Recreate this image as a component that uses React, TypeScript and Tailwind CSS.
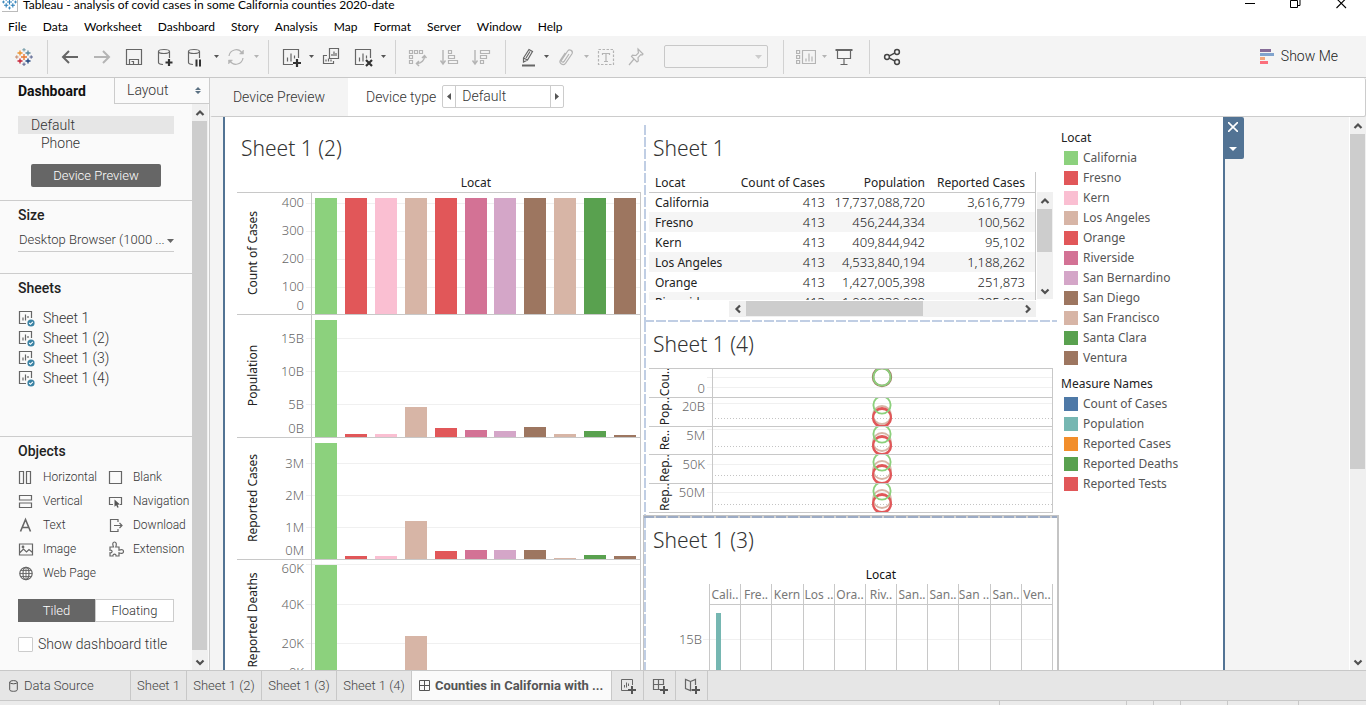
import React from "react";

const uiFont = "font-[Roboto,'Liberation_Sans',sans-serif] font-light";
const winFont = "font-[Lato,'Liberation_Sans',sans-serif]";
const vizFont = "font-['Noto_Sans','Open_Sans',sans-serif]";

const GREEN = "#8cd17d";
const RED = "#e15759";
const PINK = "#fabfd2";
const TAN = "#d7b5a6";
const ROSE = "#d37295";
const LILAC = "#d4a6c8";
const BROWN = "#9d7660";
const DARK_GREEN = "#59a14f";

const counties = [
  { name: "California", color: GREEN, short: "Cali.." },
  { name: "Fresno", color: RED, short: "Fre.." },
  { name: "Kern", color: PINK, short: "Kern" },
  { name: "Los Angeles", color: TAN, short: "Los .." },
  { name: "Orange", color: RED, short: "Ora.." },
  { name: "Riverside", color: ROSE, short: "Riv.." },
  { name: "San Bernardino", color: LILAC, short: "San.." },
  { name: "San Diego", color: BROWN, short: "San.." },
  { name: "San Francisco", color: TAN, short: "San .." },
  { name: "Santa Clara", color: DARK_GREEN, short: "San.." },
  { name: "Ventura", color: BROWN, short: "Ven.." },
];

const measures = [
  { name: "Count of Cases", color: "#4e79a7" },
  { name: "Population", color: "#76b7b2" },
  { name: "Reported Cases", color: "#f28e2b" },
  { name: "Reported Deaths", color: "#59a14f" },
  { name: "Reported Tests", color: "#e15759" },
];

/* ---------- toolbar ---------- */

function Caret({ faint = false, label }: { faint?: boolean; label: string }) {
  return (
    <button aria-label={label} className="flex h-8 w-2 items-center justify-center">
      <svg width="5" height="3" viewBox="0 0 5 3" fill={faint ? "#b4b4b4" : "#555"}>
        <path d="M0 0h5L2.500 3z" />
      </svg>
    </button>
  );
}

function Tool({
  label,
  narrow = false,
  faint = false,
  size = 20,
  children,
}: {
  label: string;
  narrow?: boolean;
  faint?: boolean;
  size?: number;
  children: React.ReactNode;
}) {
  return (
    <button
      aria-label={label}
      className={`flex h-8 items-center justify-center ${narrow ? "w-7" : "w-8"} ${faint ? "text-[#b4b4b4]" : "text-[#666]"}`}
    >
      <svg width={size} height="20" viewBox={`0 0 ${size} 20`} fill="none" stroke="currentColor" strokeWidth="1.2">
        {children}
      </svg>
    </button>
  );
}

function TableauMark({ mono = false }: { mono?: boolean }) {
  const c = (v: string) => (mono ? "#2d7fb8" : v);
  return (
    <svg width="18" height="18" viewBox="0 0 18 18" fill="none" strokeWidth="1.3">
      <path d="M9 6v6M6 9h6" stroke={c("#e8762c")} />
      <path d="M5 2.500v5M2.500 5h5" stroke={c("#eb912c")} />
      <path d="M13 2.500v5M10.500 5h5" stroke={c("#59879b")} />
      <path d="M5 10.500v5M2.500 13h5" stroke={c("#c72035")} />
      <path d="M13 10.500v5M10.500 13h5" stroke={c("#1f447e")} />
      <path d="M9 0v3.500M7.300 1.800h3.400" stroke={c("#7199a6")} strokeWidth="1" />
      <path d="M9 14.500v3.500M7.300 16.200h3.400" stroke={c("#5b6591")} strokeWidth="1" />
      <path d="M1.800 7.300v3.400M0 9h3.500" stroke={c("#c98a6a")} strokeWidth="1" />
      <path d="M16.200 7.300v3.400M14.500 9H18" stroke={c("#5b6591")} strokeWidth="1" />
    </svg>
  );
}

const group = "flex h-[34px] items-center border-r border-[#d2d2d2]";

function Toolbar() {
  return (
    <div className="flex h-[42px] shrink-0 items-center border-b border-[#c8c8c8] bg-[#f4f4f4]">
      <div className={`${group} w-12 justify-center`}>
        <button aria-label="Start page">
          <TableauMark />
        </button>
      </div>
      <div className={`${group} pr-2 pl-[6px]`}>
        <Tool label="Undo">
          <path d="M18 10H3M9 4l-6 6 6 6" strokeWidth="2" />
        </Tool>
        <Tool label="Redo" faint>
          <path d="M2 10h15M11 4l6 6-6 6" strokeWidth="2" />
        </Tool>
        <Tool label="Save">
          <path d="M2.500 2.500h15v15h-15zM5.500 17.500v-5h9v5M7.500 14.500h2v3" />
        </Tool>
        <Tool label="New data source">
          <ellipse cx="8" cy="4.500" rx="5.500" ry="2" />
          <path d="M2.500 4.500v11c0 .9 2 1.800 4.500 2M13.500 4.500V11" />
          <path d="M13 12v7M9.500 15.500h7" stroke="#333" strokeWidth="2.200" />
        </Tool>
        <Tool label="Pause auto updates" narrow>
          <ellipse cx="8" cy="4.500" rx="5.500" ry="2" />
          <path d="M2.500 4.500v11c0 .9 2 1.800 4.500 2M13.500 4.500V11" />
          <path d="M10.500 12.500v7M14 12.500v7" stroke="#333" strokeWidth="2" />
        </Tool>
        <span className="w-[2px]" />
        <Caret label="Update options" />
        <Tool label="Run update" faint>
          <path d="M3 9a7.200 7.200 0 0 1 13-3.200M17 11a7.200 7.200 0 0 1-13 3.200" />
          <path d="M17.500 3v4h-4zM2.500 17v-4h4z" fill="currentColor" strokeWidth=".5" />
        </Tool>
        <Caret label="Run options" faint />
      </div>
      <div className={`${group} pr-2 pl-[6px]`}>
        <Tool label="New worksheet">
          <path d="M12 17.500H2.500v-15h15V11M6.500 14.500v-4M10 14.500v-8M13.500 11.500v-3" />
          <path d="M16 12v8M12 16h8" stroke="#333" strokeWidth="2.200" />
        </Tool>
        <Caret label="New worksheet options" />
        <Tool label="Duplicate">
          <path d="M8.500 1.500h9v10h-9zM11 9V7M13 9V4.500M15 9V6M6 8.500H2.500v8h10V14M5 14.500v-2M7.500 14.500v-3M10 14.500v-2" />
        </Tool>
        <Tool label="Clear sheet">
          <path d="M11 17.500H2.500v-15h15V11M6.500 14.500v-4M10 14.500v-8M13.500 11.500v-3" />
          <path d="M13 13l6 6M19 13l-6 6" stroke="#333" strokeWidth="2.200" />
        </Tool>
        <Caret label="Clear options" />
      </div>
      <div className={`${group} pr-2 pl-[5px]`}>
        <Tool label="Swap rows and columns" faint>
          <path d="M2.500 3.500h3v3h-3zM7.500 3.500h3v3h-3zM12.500 3.500h3v3h-3zM2.500 8.500h3v3h-3zM2.500 13.500h3v3h-3z" />
          <path d="M17.500 9c0 4-3 7.500-7.500 7.500M15 11l2.500-2.500L19.500 11M12 14l-2.500 2.500L12 19" strokeWidth="1.500" />
        </Tool>
        <Tool label="Sort ascending" faint>
          <path d="M4 3v13M1.500 13.500L4 17l2.500-3.500" strokeWidth="1.400" />
          <path d="M9.500 3.500h3v3h-3zM9.500 8.500h6v3h-6zM9.500 13.500h9v3h-9z" />
        </Tool>
        <Tool label="Sort descending" faint>
          <path d="M4 3v13M1.500 13.500L4 17l2.500-3.500" strokeWidth="1.400" />
          <path d="M9.500 3.500h9v3h-9zM9.500 8.500h6v3h-6zM9.500 13.500h3v3h-3z" />
        </Tool>
      </div>
      <div className={`${group} pr-[15px] pl-2`}>
        <Tool label="Highlight" narrow>
          <path d="M5.500 11l5.500-8.500 3.500 2L9.500 13l-4 2zM5.500 11l4 2M12 4.500l-4 6.500" />
          <path d="M4 18.500h13" strokeWidth="2" />
        </Tool>
        <Caret label="Highlight options" />
        <Tool label="Group members" faint>
          <path d="M13 7l-5 7.500c-1.500 1.500-3.300 0-2.300-1.700l6-8.800c1.800-2.400 5.800-.2 4.300 2.800l-6.500 9.500c-2.500 3-6.700 0-5.200-3l5-7.500" />
        </Tool>
        <Caret label="Group options" faint />
        <Tool label="Show mark labels" faint>
          <path d="M2.500 2.500h15v15h-15z" strokeDasharray="2.500 1.500" />
          <path d="M6.500 8V6.500h7V8M10 6.500v8M8 14.500h4" />
        </Tool>
        <Tool label="Fix axes" narrow faint>
          <path d="M12 2l5 5-1 1-1.200-.3-2.800 3 .3 3.300-1.300 1L5.500 9.500l1-1.300 3.500.3 2.500-2.700L12 3.500zM8 12l-5 6" />
        </Tool>
        <select
          aria-label="Fit"
          disabled
          className="ml-[14px] h-[23px] w-[104px] appearance-none rounded-[2px] border border-[#c8c8c8] bg-[#f4f4f4]"
        >
          <option></option>
        </select>
        <svg className="-ml-[13px] mr-[6px]" width="7" height="4" viewBox="0 0 7 4" fill="#ccc">
          <path d="M0 0h7L3.500 4z" />
        </svg>
      </div>
      <div className={`${group} pr-[9px] pl-2`}>
        <Tool label="Show or hide cards" narrow faint>
          <path d="M.6 3.500h3v3h-3zM.6 8.500h3v3h-3zM.6 13.500h3v3h-3zM6.500 3.500h13v13h-13zM10 14.500v-3M13 14.500v-8M16 14.500v-5" />
        </Tool>
        <Caret label="Card options" faint />
        <Tool label="Presentation mode">
          <path d="M3.500 3.500h13v8h-13zM10 11.500v6M6.500 17.500h7" />
          <path d="M1.500 3h17" strokeWidth="2" />
        </Tool>
      </div>
      <div className="flex flex-1 items-center pl-[6px]">
        <Tool label="Share">
          <g stroke="#444" strokeWidth="1.500">
            <circle cx="5" cy="10" r="2.400" />
            <circle cx="15" cy="5" r="2.400" />
            <circle cx="15" cy="15" r="2.400" />
            <path d="M7.400 8.900l5.200-2.700M7.400 11.100l5.200 2.700" />
          </g>
        </Tool>
      </div>
      <button className={`${uiFont} mr-7 flex items-center gap-[6px] text-[14px] text-[#222]`}>
        <svg width="15" height="16" viewBox="0 0 15 16">
          <path fill="#866c98" d="M0 0h11v3H0z" />
          <path fill="#80a3cd" d="M0 4h14v3H0z" />
          <path fill="#f2a57c" d="M0 8h5v3H0z" />
          <path fill="#fb6e7b" d="M0 12h8v3H0z" />
        </svg>
        Show Me
      </button>
    </div>
  );
}

/* ---------- scroll bars ---------- */

function Chevron({ dir }: { dir: "up" | "down" | "left" | "right" }) {
  const d = {
    up: "M1.500 7L5 3.500 8.500 7",
    down: "M1.500 3.500L5 7l3.500-3.500",
    left: "M7 1.500L3.500 5 7 8.500",
    right: "M3 1.500L6.500 5 3 8.500",
  }[dir];
  return (
    <svg width="10" height="10" viewBox="0 0 10 10" fill="none" stroke="#505050" strokeWidth="2.200">
      <path d={d} />
    </svg>
  );
}

function VScroll({ thumb }: { thumb: string }) {
  return (
    <div className="flex h-full flex-col items-center bg-[#f0f0f0]">
      <span className="flex h-[17px] items-center"><Chevron dir="up" /></span>
      <div className="min-h-0 w-full flex-1">
        <div className={`w-[15px] bg-[#cdcdcd] ${thumb}`} />
      </div>
      <span className="flex h-[17px] items-center"><Chevron dir="down" /></span>
    </div>
  );
}

/* ---------- left panel ---------- */

function SheetIcon() {
  return (
    <svg width="18" height="18" viewBox="0 0 18 18" fill="none" stroke="#666" strokeWidth="1.200">
      <path d="M8 14.500H1.500v-12h12V9M5 11.500v-3M7.500 11.500v-6M10 9V7" />
      <circle cx="13" cy="14" r="3.600" fill="#3a82a3" stroke="none" />
      <path d="M11.200 14l1.300 1.300 2.300-2.500" stroke="#fff" strokeWidth="1.100" />
    </svg>
  );
}

const objectIcons: Record<string, React.ReactNode> = {
  Horizontal: <path d="M1.500 2.500h4v12h-4zM8.500 2.500h4v12h-4z" />,
  Blank: <path d="M1.500 2.500h12v12h-12z" />,
  Vertical: <path d="M1.500 2.500h12v4.500h-12zM1.500 10h12v4.500h-12z" />,
  Navigation: (
    <>
      <path d="M5 11.500H1.500v-7h12v7H12" />
      <path d="M6.500 6.500l5.500 5-2.500.2 1.200 2.500-1.300.6-1.200-2.600-1.700 1.500z" fill="#555" stroke="none" />
    </>
  ),
  Text: <path d="M2.500 14.500L7.500 2.500l5 12M4.200 10.500h6.600" strokeWidth="1.600" />,
  Download: <path d="M10 5V2.500H2.500v12H10V12M6 8.500h8M11.500 6l2.500 2.500-2.500 2.500" />,
  Image: (
    <>
      <path d="M1.500 3h13v11h-13zM1.500 12l4-4 3 3 2.500-2.500 3.500 3" />
      <circle cx="5" cy="6" r=".8" />
    </>
  ),
  Extension: (
    <path d="M2 6h3.500C4 2.500 5 1 6.500 1S9 2.500 7.800 6H11v3.200c3-1.200 4.500-.4 4.500 1.300s-1.500 2.500-4.500 1.300V15H8c.5-2.500-3.500-2.500-3 0H2v-3.200c2.800.6 2.800-3.200 0-2.600z" />
  ),
  "Web Page": (
    <>
      <circle cx="8" cy="8.500" r="6.200" />
      <ellipse cx="8" cy="8.500" rx="3" ry="6.200" />
      <path d="M1.800 8.500h12.400M2.600 5.500h10.800M2.600 11.500h10.800M8 2.300v12.400" strokeWidth=".9" />
    </>
  ),
};

const objects = ["Horizontal", "Blank", "Vertical", "Navigation", "Text", "Download", "Image", "Extension", "Web Page"];
const heading = "text-[14px] font-medium leading-[18px] text-[#222]";

function SidePanel() {
  return (
    <aside className={`${uiFont} flex w-[210px] shrink-0 flex-col border-r border-[#ccc] bg-[#fafafa] text-[#333]`}>
      <div className="flex h-[26px] shrink-0">
        <button className="w-[114px] pl-[18px] text-left text-[14px] font-bold text-[#111]">Dashboard</button>
        <button className="flex flex-1 items-center justify-between border-b border-l border-[#ccc] pr-2 pl-3 text-[14px]">
          Layout
          <svg width="6" height="7" viewBox="0 0 6 7" fill="#5b7183">
            <path d="M0 3h6L3 0zM0 4h6L3 7z" />
          </svg>
        </button>
      </div>
      <div className="flex min-h-0 flex-1">
        <div className="flex min-w-0 flex-1 flex-col">
          <section className="h-[97px] shrink-0 border-b border-[#ccc] px-[18px] pt-3">
            <button className="block h-[18px] w-full bg-[#e6e6e6] pl-[13px] text-left text-[14px] leading-[18px]">Default</button>
            <button className="block h-[18px] pl-[23px] text-[14px] leading-[18px]">Phone</button>
            <button className="mt-3 ml-[13px] block h-[23px] w-[130px] rounded-[2px] bg-[#666] text-[13px] text-white">
              Device Preview
            </button>
          </section>
          <section className="h-[73px] shrink-0 border-b border-[#ccc] px-[18px] pt-[5px]">
            <h2 className={heading}>Size</h2>
            <div className="mt-[6px] flex h-[22px] items-center border-b border-[#ccc]">
              <select aria-label="Size" className="min-w-0 flex-1 appearance-none bg-transparent pb-px pl-px text-[13px]">
                <option>Desktop Browser (1000 ...</option>
              </select>
              <svg width="7" height="4" viewBox="0 0 7 4" fill="#666">
                <path d="M0 0h7L3.500 4z" />
              </svg>
            </div>
          </section>
          <section className="h-[163px] shrink-0 border-b border-[#ccc] px-[18px] pt-[5px]">
            <h2 className={heading}>Sheets</h2>
            <ul className="mt-[11px]">
              {["Sheet 1", "Sheet 1 (2)", "Sheet 1 (3)", "Sheet 1 (4)"].map((s) => (
                <li key={s} className="flex h-5 items-center gap-[7px] text-[14px]">
                  <SheetIcon />
                  {s}
                </li>
              ))}
            </ul>
          </section>
          <section className="pt-[5px] pl-[18px]">
            <h2 className={heading}>Objects</h2>
            <ul className="mt-[5px] grid grid-cols-[90px_84px] text-[12px]">
              {objects.map((o) => (
                <li key={o} className="flex h-6 items-center gap-2 whitespace-nowrap">
                  <svg className="shrink-0" width="17" height="17" viewBox="0 0 17 17" fill="none" stroke="#666" strokeWidth="1.200">
                    {objectIcons[o]}
                  </svg>
                  {o}
                </li>
              ))}
            </ul>
            <div className="mt-[14px] flex h-[23px] w-[156px] text-[13px]">
              <button className="flex-1 bg-[#666] text-white">Tiled</button>
              <button className="flex-1 border border-[#ccc] bg-white">Floating</button>
            </div>
            <label className="mt-[14px] flex h-4 items-center gap-[5px] text-[14px] leading-4 whitespace-nowrap">
              <input type="checkbox" className="size-[15px] appearance-none rounded-[1px] border border-[#ccc] bg-white" />
              Show dashboard title
            </label>
          </section>
        </div>
        <div className="mr-px w-4 shrink-0">
          <VScroll thumb="h-[calc(100%-3px)]" />
        </div>
      </div>
    </aside>
  );
}

/* ---------- views ---------- */

function ViewTitle({ children }: { children: React.ReactNode }) {
  return <h2 className="h-[30px] text-[21px] leading-[30px] font-light text-[#333]">{children}</h2>;
}

const barX = [78, 108, 138, 168, 198, 228, 257, 287, 317, 347, 377];

const barRows = [
  {
    label: "Count of Cases", top: 29, base: 151,
    ticks: [["400", 10, 11], ["300", 38, 39], ["200", 66, 67], ["100", 94, 95], ["0", 113, 0]] as [string, number, number][],
    bars: [116, 116, 116, 116, 116, 116, 116, 116, 116, 116, 116],
  },
  {
    label: "Population", top: 151, base: 274,
    ticks: [["15B", 24, 24], ["10B", 57, 57], ["5B", 90, 90], ["0B", 114, 0]] as [string, number, number][],
    bars: [117, 3, 3, 30, 9, 7, 6, 10, 3, 6, 2],
  },
  {
    label: "Reported Cases", top: 274, base: 396,
    ticks: [["3M", 26, 26], ["2M", 58, 58], ["1M", 90, 90], ["0M", 113, 0]] as [string, number, number][],
    bars: [116, 3, 3, 38, 8, 9, 9, 9, 1, 4, 3],
  },
  {
    label: "Reported Deaths", top: 396, base: 518,
    ticks: [["60K", 9, 5], ["40K", 45, 45], ["20K", 84, 84], ["0K", 113, 0]] as [string, number, number][],
    bars: [116, 3, 3, 45, 9, 9, 9, 9, 1, 4, 3],
  },
];

function BarView() {
  return (
    <svg width="404" height="520" viewBox="0 0 404 520" fontSize="12">
      <text x="239" y="24" textAnchor="middle" fill="#222">Locat</text>
      {barRows.map((r) => (
        <g key={r.label}>
          {r.ticks.map(([t, ty, gy]) => (
            <g key={t}>
              {gy > 0 && <rect x="69" y={r.top + gy} width="334" height="1" fill="#f0f0f0" />}
              <text x="67" y={r.top + ty + 5} textAnchor="end" fill="#666" className="font-light" fontSize="13">{t}</text>
            </g>
          ))}
          {r.bars.map((h, i) => (
            <rect key={i} x={barX[i]} y={r.base - h} width="22" height={h} fill={counties[i].color} />
          ))}
          <text transform={`translate(20 ${(r.top + r.base) / 2}) rotate(-90)`} textAnchor="middle" fill="#222">{r.label}</text>
          <rect x="0" y={r.top} width="404" height="1" fill="#c8c8c8" />
        </g>
      ))}
      <rect x="74" y="29" width="1" height="491" fill="#c8c8c8" />
      <rect x="403" y="29" width="1" height="491" fill="#c8c8c8" />
    </svg>
  );
}

const crosstab = [
  ["California", "413", "17,737,088,720", "3,616,779"],
  ["Fresno", "413", "456,244,334", "100,562"],
  ["Kern", "413", "409,844,942", "95,102"],
  ["Los Angeles", "413", "4,533,840,194", "1,188,262"],
  ["Orange", "413", "1,427,005,398", "251,873"],
  ["Riverside", "413", "1,090,930,090", "295,963"],
];

function Crosstab() {
  return (
    <div className="flex h-32 pl-[3px]">
      <div className="w-[387px] shrink-0 overflow-hidden border-r border-[#c8c8c8]">
        <table className="w-full table-fixed border-separate border-spacing-0 text-[12px] text-[#222]">
          <colgroup>
            <col className="w-[82px]" />
            <col className="w-[100px]" />
            <col className="w-[100px]" />
            <col className="w-[104px]" />
          </colgroup>
          <thead>
            <tr className="h-[21px]">
              {["Locat", "Count of Cases", "Population", "Reported Cases"].map((h, i) => (
                <th
                  key={h}
                  className={`border-b border-[#c8c8c8] p-0 pt-[2px] font-normal whitespace-nowrap leading-[18px] ${i === 0 ? "pl-[6px] text-left" : i === 3 ? "pr-[10px] text-right" : "pr-[6px] text-right"}`}
                >
                  {h}
                </th>
              ))}
            </tr>
          </thead>
          <tbody>
            {crosstab.map((row) => (
              <tr key={row[0]} className="h-5 first:h-[19px] even:bg-[#f5f5f5]">
                {row.map((v, i) => (
                  <td
                    key={i}
                    className={`p-0 leading-[19px] whitespace-nowrap ${i === 0 ? "pl-[6px]" : i === 3 ? "pr-[10px] text-right text-[13px] font-light" : "pr-[6px] text-right text-[13px] font-light"}`}
                  >
                    {v}
                  </td>
                ))}
              </tr>
            ))}
          </tbody>
        </table>
      </div>
      <div className="mt-5 ml-px h-[107px] w-4">
        <VScroll thumb="h-[43px]" />
      </div>
    </div>
  );
}

const dotRows = [
  { label: "Cou..", top: 0, tick: "0", ty: 20, grid: [9, 19], dots: [[9, BROWN], [9, GREEN]] },
  { label: "Pop..", top: 29, tick: "20B", ty: 38, grid: [35], dotted: 50, dots: [[47, TAN], [50, RED], [49, RED], [37, GREEN]] },
  { label: "Re..", top: 58, tick: "5M", ty: 67, grid: [61], dotted: 78, dots: [[74, TAN], [78, RED], [77, RED], [66, GREEN]] },
  { label: "Rep..", top: 86, tick: "50K", ty: 96, grid: [96], dotted: 107, dots: [[102, TAN], [107, RED], [106, RED], [94, GREEN]] },
  { label: "Rep..", top: 115, tick: "50M", ty: 124, grid: [124], dotted: 136, dots: [[131, TAN], [136, RED], [135, RED], [123, GREEN]] },
] as { label: string; top: number; tick: string; ty: number; grid: number[]; dotted?: number; dots: [number, string][] }[];

function DotView() {
  return (
    <svg width="404" height="145" viewBox="0 0 404 145" fontSize="12">
      {dotRows.map((r, i) => (
        <g key={i}>
          <clipPath id={`pane-${i}`}>
            <rect x="64" y={r.top + 1} width="339" height="28" />
          </clipPath>
          {r.grid.map((g) => (
            <rect key={g} x="58" y={g} width="345" height="1" fill="#f0f0f0" />
          ))}
          {r.dotted && <path d={`M66 ${r.dotted}.5h337`} stroke="#c4c4c4" strokeDasharray="1 2" />}
          <g clipPath={`url(#pane-${i})`} fill="none">
            {r.dots.map(([y, c], k) => (
              <circle key={k} cx="233" cy={y} r={c === GREEN ? 8.600 : 9} stroke={c} strokeWidth={c === BROWN ? 2.400 : 1.900} />
            ))}
          </g>
          <text x="56" y={r.ty + 5} textAnchor="end" fill="#666" className="font-light" fontSize="13">{r.tick}</text>
          <text transform={`translate(20 ${r.top + 14}) rotate(-90)`} textAnchor="middle" fill="#222">{r.label}</text>
          <rect x="0" y={r.top} width="404" height="1" fill="#c8c8c8" />
        </g>
      ))}
      <rect x="0" y="144" width="404" height="1" fill="#c8c8c8" />
      <rect x="63" y="0" width="1" height="145" fill="#c8c8c8" />
      <rect x="403" y="0" width="1" height="145" fill="#c8c8c8" />
    </svg>
  );
}

const colX = [60, 91, 122, 154, 185, 216, 247, 278, 309, 341, 372, 403];

function ColumnView() {
  return (
    <svg width="404" height="130" viewBox="0 0 404 130" fontSize="12">
      <text x="232" y="16" textAnchor="middle" fill="#111">Locat</text>
      <rect x="54" y="76" width="350" height="1" fill="#f0f0f0" />
      <text x="53" y="81" textAnchor="end" fill="#666" className="font-light" fontSize="13">15B</text>
      {colX.map((x) => (
        <rect key={x} x={x} y="21" width="1" height="109" fill="#c8c8c8" />
      ))}
      <rect x="60" y="41" width="344" height="1" fill="#c8c8c8" />
      {counties.map((c, i) => (
        <text key={c.name} x={colX[i] + 16} y="36" textAnchor="middle" fill="#787878">{c.short}</text>
      ))}
      <rect x="67" y="50" width="5" height="80" fill="#76b7b2" />
    </svg>
  );
}

const vDash = "w-[2px] shrink-0 bg-[repeating-linear-gradient(180deg,#c0cee4_0px,#c0cee4_10px,transparent_10px,transparent_12px)]";
const hDash = "h-[2px] shrink-0 bg-[repeating-linear-gradient(90deg,#c0cee4_0px,#c0cee4_10px,transparent_10px,transparent_12px)]";

function Legend({ title, items }: { title: string; items: { name: string; color: string }[] }) {
  return (
    <div>
      <h3 className="mb-[1px] h-[18px] text-[12px] leading-[18px] text-[#222]">{title}</h3>
      <ul>
        {items.map((it) => (
          <li key={it.name} className="flex h-5 items-center gap-[5px] pl-[3px] text-[12px] text-[#555]">
            <span className="size-[14px]" style={{ backgroundColor: it.color }} />
            {it.name}
          </li>
        ))}
      </ul>
    </div>
  );
}

function DashboardCanvas() {
  return (
    <div className={`${vizFont} flex min-h-0 flex-1 overflow-hidden bg-[#f4f4f4]`}>
      <div className="ml-[13px] flex w-[1002px] shrink-0 border-x-2 border-[#527394] bg-white">
        <section className="w-[418px] shrink-0 pt-4 pl-3">
          <div className="pl-1">
            <ViewTitle>Sheet 1 (2)</ViewTitle>
          </div>
          <BarView />
        </section>

        <div className="flex w-[416px] shrink-0 flex-col">
          <section className="flex h-[203px] shrink-0 pl-px">
            <div className={`${vDash} mt-2`} />
            <div className="flex-1 pt-4">
              <div className="pl-[7px]">
                <ViewTitle>Sheet 1</ViewTitle>
              </div>
              <div className="mt-[9px]">
                <Crosstab />
              </div>
              <div className="mt-px ml-[83px] flex h-4 w-[307px] items-center bg-[#f0f0f0]">
                <span className="flex w-[17px] justify-center"><Chevron dir="left" /></span>
                <div className="h-[15px] w-[177px] self-start bg-[#cdcdcd]" />
                <span className="ml-auto flex w-[17px] justify-center"><Chevron dir="right" /></span>
              </div>
            </div>
          </section>
          <section className="h-[195px] shrink-0 pl-px">
            <div className={`${hDash} mr-[2px]`} />
            <div className="flex h-[193px]">
              <div className={vDash} />
              <div className="flex-1 pt-[7px]">
                <div className="pl-[7px]">
                  <ViewTitle>Sheet 1 (4)</ViewTitle>
                </div>
                <div className="mt-[9px] pl-[3px]">
                  <DotView />
                </div>
              </div>
            </div>
          </section>
          <section className="flex min-h-0 flex-1 flex-col border-t border-r-2 border-l border-[#c4c4c4]">
            <div className="h-[2px] shrink-0 bg-[repeating-linear-gradient(90deg,#9cabc4_0px,#9cabc4_10px,#d4d4d4_10px,#d4d4d4_12px)]" />
            <div className="flex min-h-0 flex-1">
              <div className={vDash} />
              <div className="flex-1 pt-[7px]">
                <div className="pl-[7px]">
                  <ViewTitle>Sheet 1 (3)</ViewTitle>
                </div>
                <div className="mt-2 pl-[3px]">
                  <ColumnView />
                </div>
              </div>
            </div>
          </section>
        </div>

        <aside className="flex flex-1 flex-col gap-[7px] pt-3 pl-[2px]">
          <Legend title="Locat" items={counties} />
          <Legend title="Measure Names" items={measures} />
        </aside>
      </div>
      <div className="flex h-[42px] w-[19px] shrink-0 flex-col items-center justify-between rounded-r-[2px] bg-[#527394] pt-[5px] pr-1 pb-2">
        <button aria-label="Remove from dashboard">
          <svg width="10" height="10" viewBox="0 0 10 10" stroke="#fff" strokeWidth="1.600">
            <path d="M0 0l10 10M10 0L0 10" />
          </svg>
        </button>
        <button aria-label="More options">
          <svg width="8" height="4" viewBox="0 0 8 4" fill="#fff">
            <path d="M0 0h8L4 4z" />
          </svg>
        </button>
      </div>
      <div className="ml-auto w-[17px] shrink-0 border-l border-white">
        <VScroll thumb="h-[335px]" />
      </div>
    </div>
  );
}

function DeviceBar() {
  return (
    <div className={`${uiFont} flex h-[39px] shrink-0 items-stretch rounded-[2px] border-r border-b border-[#ccc] bg-white text-[14px] text-[#333]`}>
      <div className="flex w-[138px] items-center justify-center bg-[#f4f4f4]">Device Preview</div>
      <label htmlFor="device" className="flex items-center pr-[6px] pl-[18px]">Device type</label>
      <div className="mt-[7px] flex h-[23px] w-[122px] rounded-[2px] border border-[#ccc]">
        <button aria-label="Previous device" className="flex w-[13px] items-center justify-center border-r border-[#ccc]">
          <svg width="4" height="7" viewBox="0 0 4 7" fill="#555"><path d="M4 0v7L0 3.500z" /></svg>
        </button>
        <input id="device" defaultValue="Default" className="min-w-0 flex-1 bg-white pl-[6px] outline-none" />
        <button aria-label="Next device" className="flex w-[13px] items-center justify-center border-l border-[#ccc]">
          <svg width="4" height="7" viewBox="0 0 4 7" fill="#555"><path d="M0 0v7l4-3.500z" /></svg>
        </button>
      </div>
    </div>
  );
}

/* ---------- bottom ---------- */

const newTab = "flex w-8 items-center justify-center border-r border-[#c8c8c8]";

function BottomTabs() {
  return (
    <nav className={`${uiFont} flex h-[31px] shrink-0 border-y border-[#c8c8c8] bg-[#e6e6e6] text-[13px] text-[#444]`}>
      <button className="flex w-[131px] items-center gap-[6px] border-r border-[#c8c8c8] pl-[9px]">
        <svg width="9" height="12" viewBox="0 0 9 12" fill="none" stroke="#555">
          <ellipse cx="4.500" cy="2.200" rx="3.800" ry="1.600" />
          <path d="M.7 2.200v7.600c0 2 7.600 2 7.600 0V2.200" />
        </svg>
        Data Source
      </button>
      <button className="w-14 border-r border-[#c8c8c8]">Sheet 1</button>
      {["Sheet 1 (2)", "Sheet 1 (3)", "Sheet 1 (4)"].map((s) => (
        <button key={s} className="w-[75px] border-r border-[#c8c8c8]">{s}</button>
      ))}
      <button className="flex w-[200px] items-center gap-[5px] border-r border-[#c8c8c8] bg-[#fafafa] pl-[7px] font-bold whitespace-nowrap text-[#555]">
        <svg width="11" height="11" viewBox="0 0 11 11" fill="none" stroke="#555">
          <path d="M.5.500h10v10H.5zM5.500.500v10M.5 5.500h10" />
        </svg>
        Counties in California with ...
      </button>
      <button aria-label="New worksheet" className={newTab}>
        <svg width="16" height="16" viewBox="0 0 16 16" fill="none" stroke="#666">
          <path d="M8 12.500H1.500v-11h11V7M4.500 9.500V7M6.500 9.500v-5M8.500 8V5.500" />
          <path d="M12 8v8M8 12h8" stroke="#555" strokeWidth="2" />
        </svg>
      </button>
      <button aria-label="New dashboard" className={newTab}>
        <svg width="16" height="16" viewBox="0 0 16 16" fill="none" stroke="#666" strokeWidth="1.200">
          <path d="M8 11.500H1.500v-10h10V7M6.500 1.500v10M1.500 6.500h10" />
          <path d="M12 8v8M8 12h8" stroke="#555" strokeWidth="2" />
        </svg>
      </button>
      <button aria-label="New story" className={newTab}>
        <svg width="16" height="16" viewBox="0 0 16 16" fill="none" stroke="#666" strokeWidth="1.200">
          <path d="M6.500 3.500L1.500 1.500v9l5 2zM6.500 3.500l5-2V7M6.500 12.500l1.500-.7" />
          <path d="M12 8v8M8 12h8" stroke="#555" strokeWidth="2" />
        </svg>
      </button>
    </nav>
  );
}

export default function App() {
  return (
    <div className="flex h-screen flex-col overflow-hidden bg-white">
      <header className={`${winFont} shrink-0 text-[12px] text-black`}>
        <div className="flex h-[18px] items-start overflow-hidden">
          <span className="ml-[2px] flex h-3 w-4 items-end justify-center overflow-hidden border-r border-b border-[#bbb]">
            <TableauMark mono />
          </span>
          <span className="ml-[5px] flex-1 leading-[10px] whitespace-nowrap">
            Tableau - analysis of covid cases in some California counties 2020-date
          </span>
          <div className="mr-[19px] flex gap-[35px]">
            <button aria-label="Minimize">
              <svg width="10" height="10" viewBox="0 0 10 10"><path d="M0 3h10v1H0z" /></svg>
            </button>
            <button aria-label="Restore">
              <svg width="11" height="10" viewBox="0 0 11 10" fill="none" stroke="#000">
                <path d="M.5.500h7v7h-7zM2.500.500V-2h7.500v7.500H7.500" />
              </svg>
            </button>
            <button aria-label="Close">
              <svg width="11" height="10" viewBox="0 0 11 10" stroke="#000" strokeWidth="1.100">
                <path d="M.5-1.500l9.500 9.500M10-1.500L.5 8" />
              </svg>
            </button>
          </div>
        </div>
        <nav className="flex h-[18px]">
          {["File", "Data", "Worksheet", "Dashboard", "Story", "Analysis", "Map", "Format", "Server", "Window", "Help"].map((m) => (
            <button key={m} className="px-2 leading-[18px]">{m}</button>
          ))}
        </nav>
      </header>
      <Toolbar />
      <div className="flex min-h-0 flex-1">
        <SidePanel />
        <main className="flex min-w-0 flex-1 flex-col">
          <DeviceBar />
          <DashboardCanvas />
        </main>
      </div>
      <BottomTabs />
      <footer className="flex h-1 shrink-0 justify-end bg-[#ebebeb]">
        <span className="w-[127px] border-l border-[#c8c8c8]" />
        <span className="w-[27px] border-l border-[#c8c8c8]" />
        <span className="w-[27px] border-l border-[#c8c8c8]" />
        <span className="w-[47px] border-l border-[#c8c8c8]" />
        <span className="w-[71px] border-l border-[#c8c8c8]" />
        <span className="w-[68px] border-l border-[#c8c8c8]" />
      </footer>
    </div>
  );
}
